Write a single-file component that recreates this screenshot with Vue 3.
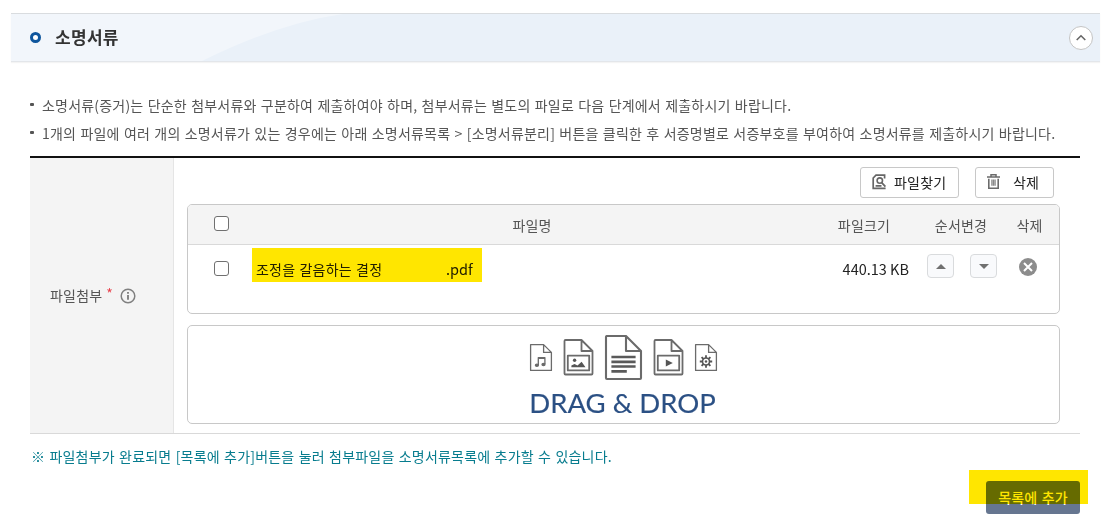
<template>
  <section class="page">
    <header class="section-head">
      <svg class="head-bg" width="360" height="47" viewBox="0 0 360 47" aria-hidden="true">
        <path d="M0 0H332Q268 9 191 47H0Z" fill="#f2f6fb" />
      </svg>
      <div class="head-title">
        <i class="ring"></i>
        <h2>소명서류</h2>
      </div>
      <button class="fold" type="button" aria-label="접기">
        <svg width="24" height="24" viewBox="0 0 24 24">
          <path d="M7.7 14L12 9.8L16.3 14" fill="none" stroke="#666" stroke-width="1.6" />
        </svg>
      </button>
    </header>

    <div class="body">
      <ul class="guide">
        <li v-for="(text, i) in guides" :key="i"><span>{{ text }}</span></li>
      </ul>

      <div class="form-row">
        <div class="form-label">
          <span>파일첨부</span>
          <em>*</em>
          <svg width="16" height="16" viewBox="0 0 16 16">
            <circle cx="8" cy="8" r="6.8" fill="none" stroke="#808080" stroke-width="1.5" />
            <path d="M8 7v4.8M8 4v1.8" stroke="#808080" stroke-width="1.9" />
          </svg>
        </div>

        <div class="form-content">
          <div class="tools">
            <button class="btn find" type="button">
              <svg width="15" height="16" viewBox="0 0 15 16" fill="none" stroke="#666">
                <path d="M12.6 4.6V1.2H4L1.2 4V14.3H8" stroke-width="1.7" />
                <circle cx="7.8" cy="6.6" r="2.7" stroke-width="1.6" />
                <path d="M9.7 8.6L13.4 12.6M3.6 11.9H9.5M8 14.3H13.6" stroke-width="1.7" />
              </svg>
              <span>파일찾기</span>
            </button>
            <button class="btn remove" type="button">
              <svg width="13" height="15" viewBox="0 0 13 15" fill="none" stroke="#6b6b6b">
                <path d="M0 3H13M4 2.6V.8H9V2.6" stroke-width="1.5" />
                <path d="M1.8 4.8V14.2H11.2V4.8" stroke-width="1.6" />
                <path d="M4.9 5.6V11.8M6.5 5.6V11.8M8.1 5.6V11.8" stroke="#888" stroke-width="1.3" />
              </svg>
              <span>삭제</span>
            </button>
          </div>

          <div class="grid">
            <div class="grid-row grid-head">
              <div class="check"><i class="box" :class="{ on: allChecked }" @click="toggleAll"></i></div>
              <div class="title-name">파일명</div>
              <div>파일크기</div>
              <div>순서변경</div>
              <div>삭제</div>
            </div>
            <div v-for="file in files" :key="file.name" class="grid-row grid-item">
              <div class="check">
                <i class="box" :class="{ on: file.checked }" @click="file.checked = !file.checked"></i>
              </div>
              <div class="name">
                <span class="stem">{{ file.name }}</span>
                <span class="ext">{{ file.ext }}</span>
                <i class="marker marker-name"></i>
              </div>
              <div class="size">{{ file.size }}</div>
              <div class="order">
                <button type="button" aria-label="위로">
                  <svg width="10" height="5" viewBox="0 0 10 5"><path d="M0 5L5 0L10 5Z" fill="#707070" /></svg>
                </button>
                <button type="button" aria-label="아래로">
                  <svg width="10" height="5" viewBox="0 0 10 5"><path d="M0 0H10L5 5Z" fill="#707070" /></svg>
                </button>
              </div>
              <div class="del">
                <svg width="18" height="18" viewBox="0 0 18 18">
                  <circle cx="9" cy="9" r="9" fill="#8c8c8c" />
                  <path d="M5 5L13 13M13 5L5 13" stroke="#fff" stroke-width="2" />
                </svg>
              </div>
            </div>
          </div>

          <div class="drop">
            <svg width="190" height="46" viewBox="0 0 190 46" fill="none" stroke="#6b6b6b" stroke-linejoin="round">
              <!-- 음악 -->
              <g stroke-width="1.3">
                <path d="M1.6 9.6H14.6L22.4 17.4V35.4H1.6ZM14.6 9.6V17.4H22.4" />
                <path d="M9.3 30V22.6H15.9V29M9.3 23.4H15.9" />
                <ellipse cx="7.9" cy="30.3" rx="1.5" ry="1.1" fill="#666" />
                <ellipse cx="14.5" cy="29.6" rx="1.5" ry="1.1" fill="#666" />
              </g>
              <!-- 이미지 -->
              <g stroke-width="1.8">
                <path d="M36.5 5H52.5L63.5 16V38.5Q63.5 39.5 62.5 39.5H36.5Q35.5 39.5 35.5 38.5V6Q35.5 5 36.5 5ZM52.5 5V16H63.5" />
                <path d="M38.8 20.6H60.2V35.4H38.8Z" />
                <circle cx="45.6" cy="25.2" r="1.7" fill="#555" stroke="none" />
                <path d="M42.4 32.2V30.6L45.5 29L48.5 30.4L52.6 26.8L56.5 32.2Z" fill="#555" stroke="none" />
              </g>
              <!-- 문서 -->
              <g stroke-width="2.1">
                <path d="M78 1H97L112 16V43Q112 44 111 44H78Q77 44 77 43V2Q77 1 78 1ZM97 1V16H112" />
                <path d="M82.4 22H106.6M82.4 26.8H106.6M82.4 31.5H106.6M82.4 36.3H97.8" stroke="#5a5a5a" stroke-width="2.7" />
              </g>
              <!-- 영상 -->
              <g stroke-width="1.8">
                <path d="M126.5 5H142.5L153.5 16V38.5Q153.5 39.5 152.5 39.5H126.5Q125.5 39.5 125.5 38.5V6Q125.5 5 126.5 5ZM142.5 5V16H153.5" />
                <path d="M128.8 20.6H150.2V35.4H128.8Z" />
                <path d="M136.8 24.4V31.6L143.8 28Z" fill="#555" stroke="none" />
              </g>
              <!-- 설정 -->
              <g stroke-width="1.3">
                <path d="M166.6 9.6H179.6L187.4 17.4V35.4H166.6ZM179.6 9.6V17.4H187.4" />
                <circle cx="177" cy="26.5" r="3.5" stroke="#555" stroke-width="1.6" />
                <circle cx="177" cy="26.5" r="1.2" fill="#555" stroke="none" />
                <path
                  d="M177 20.3V23M177 30V32.7M170.8 26.5H173.5M180.5 26.5H183.2M172.6 22.1L174.5 24M179.5 29L181.4 30.9M172.6 30.9L174.5 29M179.5 24L181.4 22.1"
                  stroke="#555"
                  stroke-width="1.8"
                />
              </g>
            </svg>
            <strong>DRAG &amp; DROP</strong>
          </div>
        </div>
      </div>

      <p class="notice">※ 파일첨부가 완료되면 [목록에 추가]버튼을 눌러 첨부파일을 소명서류목록에 추가할 수 있습니다.</p>

      <div class="actions">
        <button class="add" type="button">목록에 추가</button>
        <i class="marker marker-add"></i>
      </div>
    </div>
  </section>
</template>

<script setup>
import { ref, computed } from 'vue';

// 안내 문구
const guides = [
  '소명서류(증거)는 단순한 첨부서류와 구분하여 제출하여야 하며, 첨부서류는 별도의 파일로 다음 단계에서 제출하시기 바랍니다.',
  '1개의 파일에 여러 개의 소명서류가 있는 경우에는 아래 소명서류목록 > [소명서류분리] 버튼을 클릭한 후 서증명별로 서증부호를 부여하여 소명서류를 제출하시기 바랍니다.',
];

// 첨부 파일 목록
const files = ref([
  { name: '조정을 갈음하는 결정', ext: '.pdf', size: '440.13 KB', checked: false },
]);

const allChecked = computed(() => files.value.every((file) => file.checked));

const toggleAll = () => {
  const next = !allChecked.value;
  files.value.forEach((file) => {
    file.checked = next;
  });
};
</script>

<style>
body {
  margin: 0;
  background: #fff;
}
</style>

<style scoped>
.page {
  box-sizing: border-box;
  width: 1105px;
  height: 530px;
  padding: 13px 5px 0 11px;
  overflow: hidden;
  background: #fff;
  color: #555;
  font-family: 'Noto Sans CJK KR', 'Noto Sans', sans-serif;
  font-size: 14px;
  letter-spacing: 0.2px;
  word-spacing: 0.92px;
}

button {
  box-sizing: border-box;
  margin: 0;
  padding: 0;
  font: inherit;
  letter-spacing: inherit;
  word-spacing: inherit;
}

svg {
  display: block;
  flex: none;
}

/* 제목 영역 */
.section-head {
  position: relative;
  box-sizing: border-box;
  display: flex;
  align-items: center;
  justify-content: space-between;
  height: 49px;
  padding: 0 7px 0 19px;
  border-top: 1px solid #d9dcdf;
  border-bottom: 1px solid #e3e6ea;
  background: #eaf1f9;
  box-shadow: 0 1px 1px #f4f4f4;
}

.head-bg {
  position: absolute;
  left: 0;
  top: 0;
}

.head-title {
  position: relative;
  display: flex;
  align-items: center;
  gap: 14px;
}

.ring {
  box-sizing: border-box;
  width: 11px;
  height: 11px;
  border: 3px solid #0f569d;
  border-radius: 50%;
  background: #fff;
}

h2 {
  margin: 0;
  padding-bottom: 2px;
  color: #333;
  font-size: 17px;
  font-weight: 700;
  line-height: 24px;
  letter-spacing: 0.3px;
}

.fold {
  width: 24px;
  height: 24px;
  border: 1px solid #c4c4c4;
  border-radius: 50%;
  background: #fff;
  display: flex;
  align-items: center;
  justify-content: center;
}

.body {
  padding: 29px 20px 0 19px;
}

.guide {
  margin: 0 0 9px;
  padding: 0;
  list-style: none;
}

.guide li {
  display: flex;
  align-items: center;
  gap: 8px;
  height: 28px;
  white-space: nowrap;
}

.guide li::before {
  content: '';
  width: 4px;
  height: 3px;
  margin-top: -1px;
  border-radius: 1px;
  background: #555;
}

/* 첨부 영역 */
.form-row {
  box-sizing: border-box;
  display: flex;
  height: 278px;
  border-top: 2px solid #111;
  border-bottom: 1px solid #d9d9d9;
}

.form-label {
  box-sizing: border-box;
  display: flex;
  align-items: center;
  width: 144px;
  padding-left: 20px;
  border-right: 1px solid #e5e5e5;
  background: #f4f4f4;
}

.form-label span {
  padding-bottom: 2px;
}

.form-label em {
  margin: -5px 7px 0 4px;
  color: #e8424c;
  font-style: normal;
}

.form-content {
  flex: 1;
  padding: 9px 20px 0 13px;
}

.tools {
  display: flex;
  justify-content: flex-end;
  gap: 16px;
  padding-right: 6px;
}

.btn {
  display: flex;
  align-items: center;
  height: 31px;
  border: 1px solid #c8c8c8;
  border-radius: 3px;
  background: #fff;
  color: #222;
}

.btn svg {
  margin-top: -2px;
}

.btn span {
  padding-bottom: 2px;
}

.find {
  width: 99px;
  padding-left: 11px;
  gap: 7px;
}

.remove {
  width: 79px;
  padding-left: 11px;
  gap: 13px;
}

.grid {
  box-sizing: border-box;
  height: 110px;
  margin-top: 6px;
  border: 1px solid #c8c8c8;
  border-radius: 5px;
  overflow: hidden;
}

.grid-row {
  display: grid;
  grid-template-columns: 68px 1fr 116px 78px 59px;
  align-items: center;
  text-align: center;
}

.grid-head {
  height: 39px;
  border-bottom: 1px solid #d9d9d9;
  background: #f4f4f4;
}

.title-name {
  padding-left: 2px;
}

.grid-item {
  height: 48px;
  color: #222;
}

.check {
  display: flex;
  justify-content: center;
  padding-right: 1px;
}

.box {
  box-sizing: border-box;
  width: 15px;
  height: 15px;
  border: 1px solid #707070;
  border-radius: 3px;
  background: #fff;
}

.box.on {
  background: #0f569d;
}

.grid-head .box {
  margin-top: -3px;
}

.grid-item .box {
  margin-top: -2px;
}

.name {
  position: relative;
  display: flex;
}

.stem {
  width: 190px;
  text-align: left;
}

.size,
.ext {
  font-size: 14.5px;
  line-height: 20px;
  letter-spacing: 0;
  word-spacing: 0;
}

.size {
  padding-right: 13px;
  text-align: right;
}

.order {
  display: flex;
  gap: 16px;
  padding-left: 5px;
  margin-top: -6px;
}

.order button {
  display: flex;
  align-items: center;
  justify-content: center;
  width: 27px;
  height: 24px;
  border: 1px solid #d9dbdd;
  border-radius: 4px;
  background: #f9fafc;
}

.del {
  display: flex;
  justify-content: center;
  margin: -4px 3px 0 0;
}

/* 형광펜 표시 */
.marker {
  position: absolute;
  background: #ffe600;
  mix-blend-mode: multiply;
  pointer-events: none;
}

.marker-name {
  left: -4px;
  top: -11px;
  width: 230px;
  height: 34px;
}

.marker-add {
  right: -8px;
  top: -11px;
  width: 119px;
  height: 34px;
}

.drop {
  box-sizing: border-box;
  display: flex;
  flex-direction: column;
  align-items: center;
  height: 99px;
  margin-top: 11px;
  padding-top: 9px;
  border: 1px solid #c8c8c8;
  border-radius: 5px;
}

.drop strong {
  margin: 4px 2px 0 0;
  color: #2b5084;
  font-family: Lato, sans-serif;
  font-size: 27.5px;
  font-weight: 400;
  line-height: 36px;
  letter-spacing: 0;
  word-spacing: 0;
  white-space: nowrap;
  -webkit-text-stroke: 0.15px #2b5084;
}

.notice {
  margin: 12px 0 0;
  padding-left: 1px;
  color: #077c8e;
  line-height: 21px;
  white-space: nowrap;
}

.actions {
  position: relative;
  display: flex;
  justify-content: flex-end;
  margin-top: 14px;
}

.add {
  width: 94px;
  height: 33px;
  padding-bottom: 2px;
  border: 0;
  border-radius: 3px;
  background: #667690;
  color: #fff;
  font-weight: 500;
}
</style>
